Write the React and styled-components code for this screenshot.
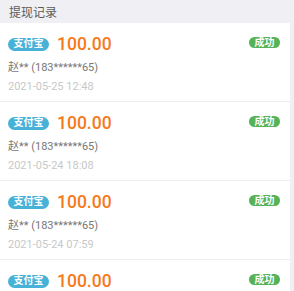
import React from "react";
import styled, { createGlobalStyle } from "styled-components";

const Global = createGlobalStyle`
  html, body { margin: 0; padding: 0; background: #f0f0f4; }
  body { font-family: Roboto, "Noto Sans CJK SC", sans-serif; }
`;

const Page = styled.div`
  width: 294px;
  height: 291px;
  overflow: hidden;
  background: #f0f0f4;
`;

const Header = styled.div`
  height: 23px;
  display: flex;
  align-items: center;
  padding-left: 9px;
  font-size: 12px;
  color: #5a5a5a;
`;

const List = styled.div`
  background: #fff;
  margin-right: 4px;
`;

const Item = styled.div`
  padding: 9px 10px 6px 8px;
  border-bottom: 1px solid #eeeeee;
  display: flex;
  flex-direction: column;
`;

const TopRow = styled.div`
  display: flex;
  align-items: flex-start;
  height: 24px;
`;

const Left = styled.div`
  display: flex;
  align-items: center;
  height: 24px;
  flex: 1;
`;

const Pill = styled.span`
  display: inline-flex;
  align-items: center;
  justify-content: center;
  height: ${(p) => p.$h}px;
  padding: 0 ${(p) => p.$px}px;
  border-radius: 7px;
  background: ${(p) => p.$bg};
  color: #fff;
  font-size: 10px;
  font-weight: 700;
  line-height: 1;
  margin-top: ${(p) => p.$mt || 0}px;
`;

const Amount = styled.span`
  margin-left: 8px;
  font-size: 17.5px;
  font-weight: 500;
  color: #f57a1c;
  line-height: 24px;
`;

const Name = styled.div`
  margin-top: 4px;
  font-size: 11px;
  line-height: 16px;
  color: #777;
`;

const DateText = styled.div`
  margin-top: 3px;
  font-size: 11px;
  line-height: 16px;
  color: #c8c8c8;
`;

const records = [
  { date: "2021-05-25 12:48" },
  { date: "2021-05-24 18:08" },
  { date: "2021-05-24 07:59" },
  { date: "2021-05-23 10:12" },
];

export default function App() {
  return (
    <Page>
      <Global />
      <Header>提现记录</Header>
      <List>
        {records.map((r, i) => (
          <Item key={i}>
            <TopRow>
              <Left>
                <Pill $bg="#47b1d8" $h={13} $px={5.5}>支付宝</Pill>
                <Amount>100.00</Amount>
              </Left>
              <Pill $bg="#55b257" $h={11} $px={5.5} $mt={5}>成功</Pill>
            </TopRow>
            <Name>赵** (183******65)</Name>
            <DateText>{r.date}</DateText>
          </Item>
        ))}
      </List>
    </Page>
  );
}
